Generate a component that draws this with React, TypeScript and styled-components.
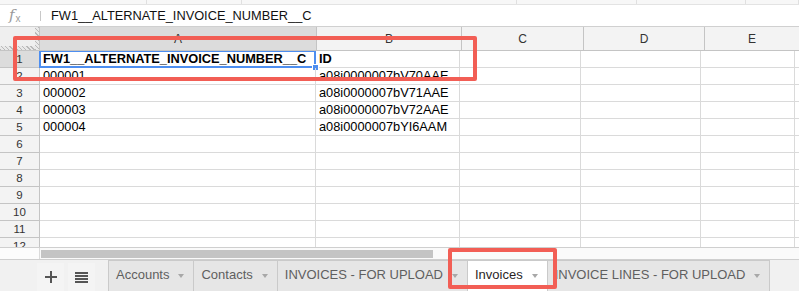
import React from "react";
import styled, { createGlobalStyle } from "styled-components";

const GlobalStyle = createGlobalStyle`
  html, body { margin: 0; padding: 0; background: #fff; }
  body { font-family: "Liberation Sans", Arial, sans-serif; color: #000; }
  #root { width: 799px; height: 291px; overflow: hidden; }
`;

const columns = [
  { key: "A", width: 276 },
  { key: "B", width: 144 },
  { key: "C", width: 121 },
  { key: "D", width: 120 },
  { key: "E", width: 94 },
];

const rows: string[][] = [
  ["FW1__ALTERNATE_INVOICE_NUMBER__C", "ID"],
  ["000001", "a08i0000007bV70AAE"],
  ["000002", "a08i0000007bV71AAE"],
  ["000003", "a08i0000007bV72AAE"],
  ["000004", "a08i0000007bYI6AAM"],
  [], [], [], [], [], [], [],
];

const sheets = [
  { name: "Accounts" },
  { name: "Contacts" },
  { name: "INVOICES - FOR UPLOAD" },
  { name: "Invoices", active: true },
  { name: "INVOICE LINES - FOR UPLOAD" },
];

const topSegments = [147, 95, 275, 120, 109, 53];

export default function App() {
  return (
    <>
      <GlobalStyle />
      <Page>
        <TopStrip>
          {topSegments.map((w, i) => (
            <TopSegment key={i} w={w} />
          ))}
        </TopStrip>

        <FormulaBar>
          <FxLabel>
            <i>f</i><sub>x</sub>
          </FxLabel>
          <FormulaDivider />
          <FormulaText>FW1__ALTERNATE_INVOICE_NUMBER__C</FormulaText>
        </FormulaBar>

        <HeaderRow>
          <Corner />
          {columns.map((c, i) => (
            <ColumnHeader key={c.key} w={c.width} selected={i === 0}>
              {c.key}
            </ColumnHeader>
          ))}
        </HeaderRow>

        <Body>
          {rows.map((r, ri) => (
            <Row key={ri}>
              <RowHeader selected={ri === 0}>{ri + 1}</RowHeader>
              {columns.map((c, ci) => (
                <Cell key={c.key} w={c.width} bold={ri === 0}>
                  {r[ci] || ""}
                  {ri === 0 && ci === 0 && (
                    <>
                      <Selection />
                      <FillHandle />
                    </>
                  )}
                </Cell>
              ))}
            </Row>
          ))}
        </Body>

        <ScrollRow>
          <ScrollCorner />
          <ScrollTrack>
            <ScrollThumb />
          </ScrollTrack>
        </ScrollRow>

        <TabBar>
          <BarButton>
            <svg width="12" height="12" viewBox="0 0 12 12">
              <rect x="5" y="0" width="2" height="12" fill="#555" />
              <rect x="0" y="5" width="12" height="2" fill="#555" />
            </svg>
          </BarButton>
          <BarButton>
            <svg width="13" height="11" viewBox="0 0 13 11">
              <rect x="0" y="0" width="13" height="2" fill="#555" />
              <rect x="0" y="3" width="13" height="2" fill="#555" />
              <rect x="0" y="6" width="13" height="2" fill="#555" />
              <rect x="0" y="9" width="13" height="2" fill="#555" />
            </svg>
          </BarButton>
          <Tabs>
            {sheets.map((s) => (
              <Tab key={s.name} active={!!s.active}>
                <TabName active={!!s.active}>{s.name}</TabName>
                <TabArrow />
              </Tab>
            ))}
          </Tabs>
        </TabBar>

        <Callout style={{ left: 13, top: 36, width: 464, height: 45 }} />
        <Callout style={{ left: 448, top: 248, width: 109, height: 41 }} />
      </Page>
    </>
  );
}

const Page = styled.div`
  position: relative;
  width: 799px;
  height: 291px;
  display: flex;
  flex-direction: column;
  overflow: hidden;
  background: #fff;
`;

const TopStrip = styled.div`
  display: flex;
  height: 4px;
  background: #f7f7f7;
  border-bottom: 1px solid #e3e3e3;
`;

const TopSegment = styled.div<{ w: number }>`
  width: ${(p) => p.w}px;
  flex: none;
  border-right: 1px solid #e0e0e0;
  box-sizing: border-box;
`;

const FormulaBar = styled.div`
  display: flex;
  align-items: center;
  height: 21px;
  border-bottom: 1px solid #d0d0d0;
  background: #fff;
`;

const FxLabel = styled.div`
  width: 40px;
  padding-left: 9px;
  box-sizing: border-box;
  font-family: "DejaVu Serif", "Liberation Serif", serif;
  color: #9a9a9a;
  font-size: 15px;
  line-height: 1;
  & i { font-style: italic; }
  & sub { font-family: "Liberation Sans", sans-serif; font-size: 10px; vertical-align: -2px; margin-left: 1px; }
`;

const FormulaDivider = styled.div`
  width: 1px;
  height: 10px;
  background: #c8c8c8;
  margin-right: 10px;
`;

const FormulaText = styled.div`
  font-size: 12.8px;
  color: #111;
  white-space: nowrap;
`;

const HeaderRow = styled.div`
  display: flex;
  height: 23px;
  border-bottom: 1px solid #c4c4c4;
  background: #f3f3f3;
`;

const hatch = `repeating-linear-gradient(45deg, #b9b9b9 0 1px, #e9e9e9 1px 3px)`;

const Corner = styled.div`
  position: relative;
  width: 39px;
  flex: none;
  border-right: 1px solid #c4c4c4;
  background: #efefef;
  &::before {
    content: "";
    position: absolute;
    right: 0;
    top: 0;
    bottom: 0;
    width: 4px;
    background: ${hatch};
  }
  &::after {
    content: "";
    position: absolute;
    left: 0;
    right: 4px;
    bottom: 0;
    height: 4px;
    background: ${hatch};
  }
`;

const ColumnHeader = styled.div<{ w: number; selected?: boolean }>`
  width: ${(p) => p.w}px;
  flex: none;
  border-right: 1px solid #c4c4c4;
  background: ${(p) => (p.selected ? "#dcdcdc" : "#f3f3f3")};
  display: flex;
  align-items: center;
  justify-content: center;
  font-size: 12px;
  color: #333;
`;

const Body = styled.div`
  flex: 1;
  overflow: hidden;
`;

const Row = styled.div`
  display: flex;
  height: 16px;
  border-bottom: 1px solid #dadada;
`;

const RowHeader = styled.div<{ selected?: boolean }>`
  width: 39px;
  flex: none;
  border-right: 1px solid #c4c4c4;
  background: ${(p) => (p.selected ? "#dcdcdc" : "#f3f3f3")};
  display: flex;
  align-items: center;
  justify-content: center;
  font-size: 11.5px;
  color: #333;
  margin-bottom: -1px;
  border-bottom: 1px solid #c4c4c4;
`;

const Cell = styled.div<{ w: number; bold?: boolean }>`
  position: relative;
  width: ${(p) => p.w}px;
  flex: none;
  border-right: 1px solid #dadada;
  padding: 0 3px;
  box-sizing: border-box;
  font-size: 12.8px;
  line-height: 16px;
  font-weight: ${(p) => (p.bold ? 700 : 400)};
  white-space: nowrap;
`;

const Selection = styled.div`
  position: absolute;
  left: -1px;
  top: -1px;
  right: -1px;
  bottom: -1px;
  border: 2px solid #4d8ef0;
  pointer-events: none;
`;

const FillHandle = styled.div`
  position: absolute;
  right: -4px;
  bottom: -4px;
  width: 5px;
  height: 5px;
  background: #4d8ef0;
  border: 1px solid #fff;
`;

const ScrollRow = styled.div`
  display: flex;
  height: 11px;
  border-top: 1px solid #cfcfcf;
`;

const ScrollCorner = styled.div`
  width: 39px;
  flex: none;
  border-right: 1px solid #dadada;
  background: #fcfcfc;
`;

const ScrollTrack = styled.div`
  flex: 1;
  background: #fafafa;
  padding: 2px 0 1px 1px;
`;

const ScrollThumb = styled.div`
  width: 392px;
  height: 8px;
  background: #c4c4c4;
`;

const TabBar = styled.div`
  display: flex;
  align-items: flex-start;
  height: 31px;
  border-top: 1px solid #cfcfcf;
  background: #f1f1f1;
  padding-left: 37px;
  gap: 4px;
`;

const BarButton = styled.div`
  width: 27px;
  height: 28px;
  margin-top: 3px;
  display: flex;
  align-items: center;
  justify-content: center;
  background: #f4f4f4;
`;

const Tabs = styled.div`
  display: flex;
  margin-left: 10px;
  align-self: stretch;
`;

const Tab = styled.div<{ active?: boolean }>`
  display: flex;
  align-items: flex-start;
  padding: 6px 9px 0 7px;
  margin-left: -1px;
  border: 1px solid #cacaca;
  border-bottom: none;
  background: ${(p) => (p.active ? "#fff" : "#e6e6e6")};
  gap: 9px;
  height: 31px;
  box-sizing: border-box;
`;

const TabName = styled.span<{ active?: boolean }>`
  font-size: 13px;
  line-height: 16px;
  color: ${(p) => (p.active ? "#2a1f1f" : "#5f5f5f")};
  white-space: nowrap;
`;

const TabArrow = styled.span`
  width: 0;
  height: 0;
  margin-top: 7px;
  border-left: 3.5px solid transparent;
  border-right: 3.5px solid transparent;
  border-top: 4px solid #a8a8a8;
`;

const Callout = styled.div`
  position: absolute;
  box-sizing: border-box;
  border: 4px solid #f25e55;
  border-radius: 2px;
  pointer-events: none;
`;
